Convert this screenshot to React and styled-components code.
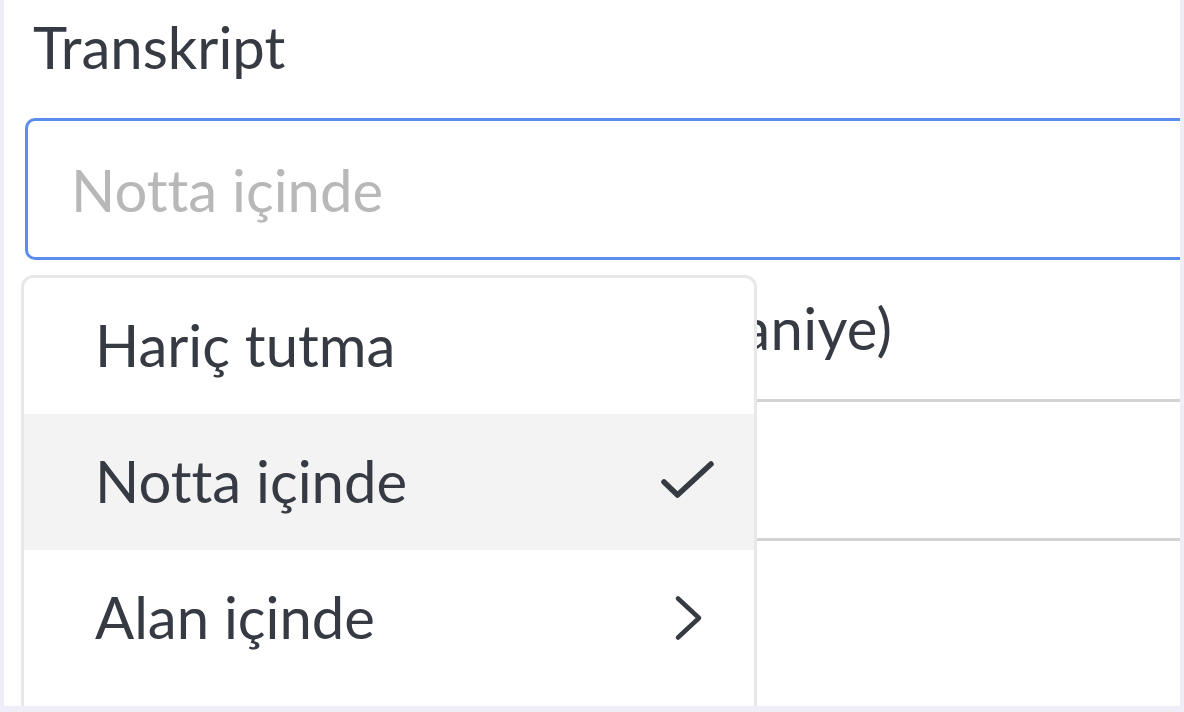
import React from "react";
import styled, { createGlobalStyle } from "styled-components";

const GlobalStyle = createGlobalStyle`
  html, body {
    margin: 0;
    padding: 0;
    background: #efeef8;
  }
  * {
    box-sizing: border-box;
  }
`;

const Page = styled.div`
  width: 1184px;
  height: 712px;
  padding: 0 4px 6px 4px;
  background: #efeef8;
  font-family: "Lato", "Liberation Sans", sans-serif;
  font-variant-ligatures: none;
  color: #363a42;
`;

const Panel = styled.div`
  height: 100%;
  background: #ffffff;
  overflow: hidden;
  padding: 12px 0 0 21px;
  display: flex;
  flex-direction: column;
  gap: 33px;
`;

const Field = styled.div`
  position: relative;
  display: flex;
  flex-direction: column;
`;

const Label = styled.label`
  height: 70px;
  line-height: 70px;
  font-size: 58px;
  padding-left: 8px;
  margin-bottom: 36px;
  white-space: nowrap;
  letter-spacing: ${(p) => p.$spacing || "0"};
`;

const Input = styled.div`
  width: calc(100% + 40px);
  height: 142px;
  border: 3px solid ${(p) => (p.$focused ? "#5a8dee" : "#d3d3d3")};
  border-radius: 10px;
  display: flex;
  align-items: center;
  padding-left: 43px;
  font-size: 58px;
  color: ${(p) => (p.$placeholder ? "#b8b8b8" : "#363a42")};
  white-space: nowrap;
`;

const Menu = styled.ul`
  position: absolute;
  top: calc(100% + 15px);
  left: -4px;
  width: 736px;
  margin: 0;
  padding: 0;
  list-style: none;
  background: #ffffff;
  border: 3px solid #e8e8e8;
  border-radius: 12px;
  overflow: hidden;
  z-index: 10;
`;

const MenuItem = styled.li`
  height: 136px;
  display: flex;
  align-items: center;
  justify-content: space-between;
  padding: 0 36px 4px 71px;
  font-size: 58px;
  background: ${(p) => (p.$active ? "#f3f3f3" : "transparent")};
`;

const IconBox = styled.span`
  width: 60px;
  height: 60px;
  margin-top: 4px;
  display: flex;
  align-items: center;
  justify-content: center;
`;

const Check = () => (
  <svg width="60" height="60" viewBox="0 0 60 60" fill="none">
    <path
      d="M6 30 L19.5 43 L53 12"
      stroke="#363a42"
      strokeWidth="5.5"
      strokeLinecap="round"
      strokeLinejoin="round"
    />
  </svg>
);

const Chevron = () => (
  <svg width="60" height="60" viewBox="0 0 60 60" fill="none">
    <path
      d="M20 10.5 L41 30 L20 49.5"
      stroke="#363a42"
      strokeWidth="4.5"
      strokeLinecap="round"
      strokeLinejoin="round"
    />
  </svg>
);

const options = [
  { label: "Hariç tutma" },
  { label: "Notta içinde", active: true, icon: "check" },
  { label: "Alan içinde", icon: "chevron" },
  { label: "Klasör içinde", icon: "chevron" },
];

export default function App() {
  return (
    <>
      <GlobalStyle />
      <Page>
        <Panel>
          <Field>
            <Label>Transkript</Label>
            <Input $focused $placeholder>
              Notta içinde
            </Input>
            <Menu>
              {options.map((o) => (
                <MenuItem key={o.label} $active={o.active}>
                  <span>{o.label}</span>
                  <IconBox>
                    {o.icon === "check" && <Check />}
                    {o.icon === "chevron" && <Chevron />}
                  </IconBox>
                </MenuItem>
              ))}
            </Menu>
          </Field>
          <Field>
            <Label $spacing="0.35px">Minimum konuşma süresi (saniye)</Label>
            <Input />
          </Field>
        </Panel>
      </Page>
    </>
  );
}
